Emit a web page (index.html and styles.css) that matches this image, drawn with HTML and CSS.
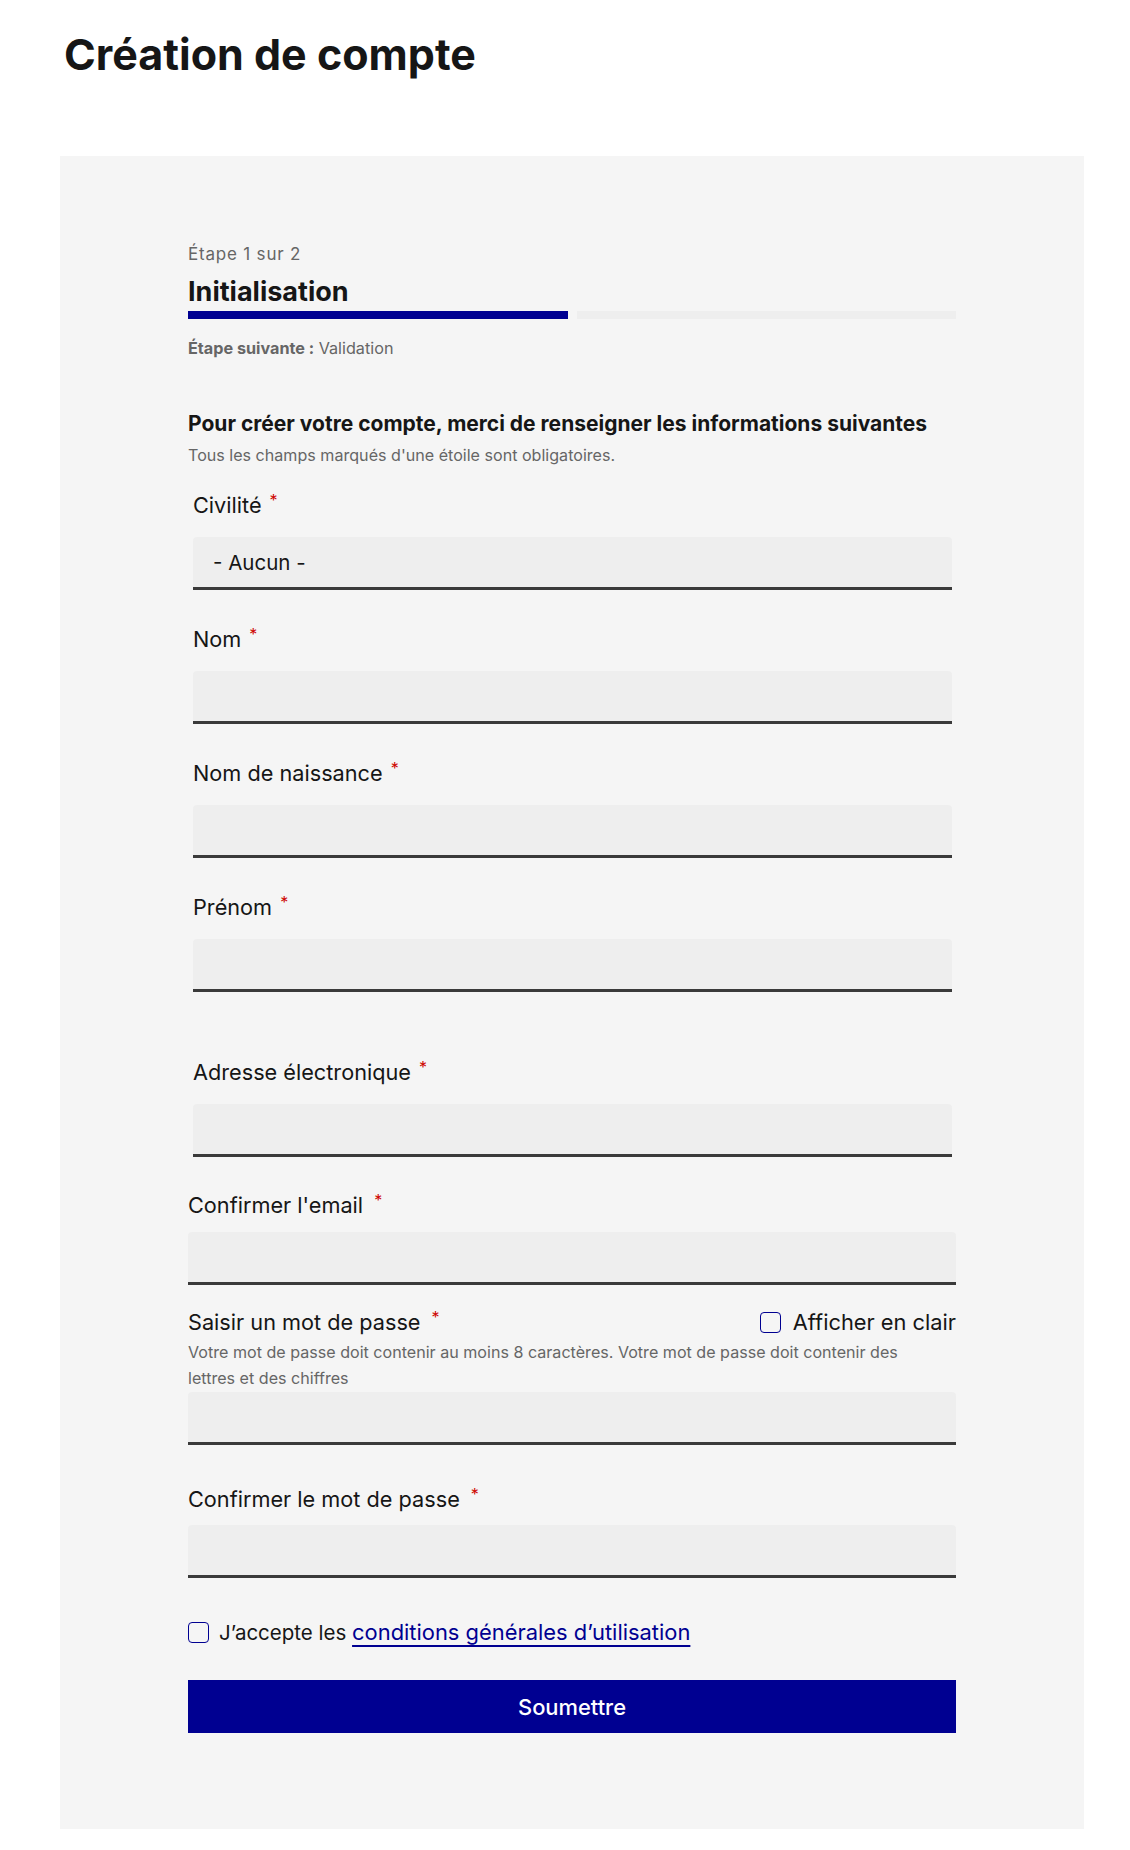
FILE: index.html
```html
<!DOCTYPE html>
<html lang="fr">
<head>
<meta charset="utf-8">
<title>Création de compte</title>
<link rel="stylesheet" href="styles.css">
</head>
<body>
<div class="page">
  <h1 class="page-title">Création de compte</h1>
  <section class="panel">
    <div class="form-col">
      <div class="stepper">
        <p class="stepper-state">Étape 1 sur 2</p>
        <h2 class="stepper-title">Initialisation</h2>
        <div class="stepper-steps"><span class="step step-done"></span><span class="step"></span></div>
        <p class="stepper-next"><strong>Étape suivante :</strong> Validation</p>
      </div>
      <form class="form">
        <p class="form-intro">Pour créer votre compte, merci de renseigner les informations suivantes</p>
        <p class="form-hint">Tous les champs marqués d'une étoile sont obligatoires.</p>
        <div class="group-inset">
          <div class="field">
            <label class="label"><span>Civilité</span><span class="req">*</span></label>
            <div class="input select"><span>- Aucun -</span></div>
          </div>
          <div class="field">
            <label class="label"><span>Nom</span><span class="req">*</span></label>
            <div class="input"></div>
          </div>
          <div class="field">
            <label class="label"><span>Nom de naissance</span><span class="req">*</span></label>
            <div class="input"></div>
          </div>
          <div class="field">
            <label class="label"><span>Prénom</span><span class="req">*</span></label>
            <div class="input"></div>
          </div>
          <div class="field field-email">
            <label class="label"><span>Adresse électronique</span><span class="req">*</span></label>
            <div class="input"></div>
          </div>
        </div>
        <div class="field field-confirm-email">
          <label class="label"><span>Confirmer l'email</span><span class="req req-wide">*</span></label>
          <div class="input"></div>
        </div>
        <div class="field field-password">
          <div class="password-head">
            <label class="label"><span>Saisir un mot de passe</span><span class="req req-wide">*</span></label>
            <label class="show-pass"><span class="checkbox"></span><span>Afficher en clair</span></label>
          </div>
          <p class="pass-hint">Votre mot de passe doit contenir au moins 8 caractères. Votre mot de passe doit contenir des lettres et des chiffres</p>
          <div class="input"></div>
        </div>
        <div class="field field-confirm-pass">
          <label class="label"><span>Confirmer le mot de passe</span><span class="req req-wide">*</span></label>
          <div class="input"></div>
        </div>
        <label class="accept"><span class="checkbox"></span><span><span>J’accepte les</span> <a href="#" class="link">conditions générales d’utilisation</a></span></label>
        <button type="button" class="submit">Soumettre</button>
      </form>
    </div>
  </section>
</div>
</body>
</html>
```

FILE: styles.css
```css
* { box-sizing: border-box; }

body {
  margin: 0;
  background: #ffffff;
  color: #161616;
  font-family: Inter, "Liberation Sans", sans-serif;
}

.page {
  padding: 0 46px 0 60px;
}

.page-title {
  margin: 0 0 74px 0;
  padding: 26px 0 0 4px;
  font-size: 43px;
  line-height: 56px;
  font-weight: 700;
}

.panel {
  background: #f5f5f5;
  padding: 86px 128px 96px 128px;
}

.form-col {
  width: 768px;
}

.stepper-state {
  margin: 0;
  font-size: 17px;
  letter-spacing: 0.8px;
  line-height: 24px;
  color: #666666;
}

.stepper-title {
  margin: 10px 0 0 0;
  font-size: 27px;
  line-height: 32px;
  font-weight: 700;
}

.stepper-steps {
  margin-top: 3px;
  display: grid;
  grid-template-columns: 1fr 1fr;
  gap: 9px;
  height: 8px;
}

.step { background: #eeeeee; }
.step-done { background: #000091; }

.stepper-next {
  margin: 17px 0 0 0;
  font-size: 16.2px;
  line-height: 24px;
  color: #666666;
}
.stepper-next strong { font-weight: 700; }

.form-intro {
  margin: 50px 0 0 0;
  font-size: 21px;
  line-height: 28px;
  font-weight: 700;
}

.form-hint {
  margin: 5px 0 0 0;
  font-size: 16.1px;
  line-height: 24px;
  color: #666666;
}

.group-inset {
  margin: 24px 4px 0 5px;
}

.label {
  display: block;
  font-size: 21.7px;
  line-height: 28px;
  height: 28px;
}

.req {
  color: #ce0500;
  font-size: 16px;
  line-height: 0;
  vertical-align: 7px;
  margin-left: 8px;
}
.req-wide { margin-left: 11px; }

.input {
  margin-top: 18px;
  height: 53px;
  background: #eeeeee;
  border-radius: 4px 4px 0 0;
  box-shadow: inset 0 -3px 0 0 #3a3a3a;
}

.select {
  display: flex;
  align-items: center;
  padding: 0 20px 3px 20px;
  font-size: 20.5px;
}

.group-inset .field + .field { margin-top: 35px; }
.group-inset .field + .field-email { margin-top: 66px; }

.field-confirm-email { margin-top: 34px; }
.field-confirm-email .input { margin-top: 13px; }

.field-password { margin-top: 23px; }

.password-head {
  display: flex;
  justify-content: space-between;
  align-items: center;
}

.show-pass {
  display: flex;
  align-items: center;
  gap: 12px;
  font-size: 21.8px;
  line-height: 28px;
}

.checkbox {
  display: block;
  width: 21px;
  height: 21px;
  border: 1px solid #000091;
  border-radius: 4px;
  background: transparent;
  flex: none;
}

.pass-hint {
  max-width: 740px;
  margin: 3px 0 0 0;
  font-size: 16.1px;
  line-height: 26px;
  color: #666666;
}

.field-password .input { margin-top: 1px; }

.field-confirm-pass { margin-top: 40px; }
.field-confirm-pass .input { margin-top: 12px; }

.accept {
  margin-top: 40px;
  display: flex;
  align-items: center;
  gap: 10px;
  font-size: 20.5px;
  line-height: 28px;
}

.link {
  font-size: 21.9px;
  color: #000091;
  text-decoration: underline;
  text-decoration-thickness: 2px;
  text-underline-offset: 5px;
}

.submit {
  display: block;
  width: 100%;
  margin-top: 33px;
  height: 53px;
  border: 0;
  background: #000091;
  color: #ffffff;
  font-family: Inter, "Liberation Sans", sans-serif;
  font-size: 21.9px;
  font-weight: 500;
}
```
